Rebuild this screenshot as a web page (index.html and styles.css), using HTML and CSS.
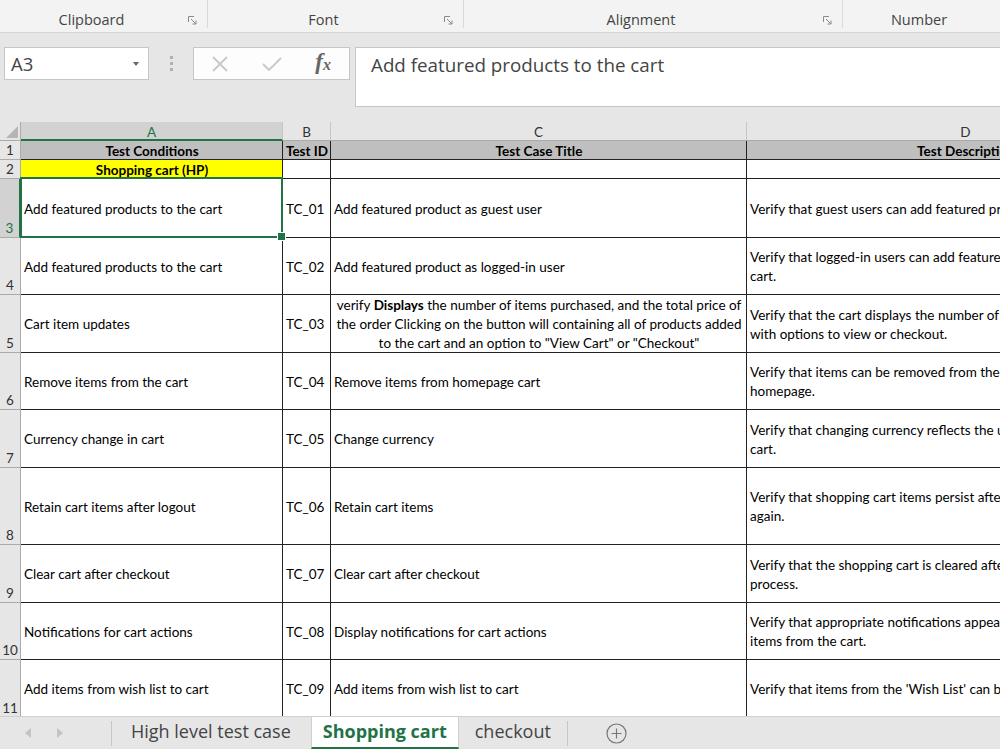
FILE: index.html
```html
<!DOCTYPE html>
<html lang="en">
<head>
    <meta charset="UTF-8">
    <meta name="viewport" content="width=device-width, initial-scale=1.0">
    <title>Shopping cart - Test cases</title>
    <link rel="stylesheet" href="styles.css">
</head>
<body>
    <!-- ribbon group labels -->
    <div class="ribbon">
        <div class="group g-clipboard">
            <span class="group-label">Clipboard</span>
            <svg class="launcher" viewBox="0 0 9 9"><path d="M0.5 6V0.5H6" /><path d="M3 3L8 8M8 4.5V8H4.5" /></svg>
        </div>
        <div class="group g-font">
            <span class="group-label">Font</span>
            <svg class="launcher" viewBox="0 0 9 9"><path d="M0.5 6V0.5H6" /><path d="M3 3L8 8M8 4.5V8H4.5" /></svg>
        </div>
        <div class="group g-alignment">
            <span class="group-label">Alignment</span>
            <svg class="launcher" viewBox="0 0 9 9"><path d="M0.5 6V0.5H6" /><path d="M3 3L8 8M8 4.5V8H4.5" /></svg>
        </div>
        <div class="group g-number">
            <span class="group-label">Number</span>
        </div>
    </div>

    <!-- name box + formula bar -->
    <div class="formula-bar">
        <div class="name-box"><span>A3</span><span class="caret"></span></div>
        <div class="grip"><i></i><i></i><i></i></div>
        <div class="fx-buttons">
            <span class="fx-slot"><svg width="16" height="16" viewBox="0 0 16 16"><path d="M1 1L15 15M15 1L1 15" /></svg></span>
            <span class="fx-slot"><svg width="20" height="16" viewBox="0 0 20 16"><path d="M1 8L7 14L19 2" /></svg></span>
            <span class="fx-slot fx"><i>f</i><i class="fx-x">x</i></span>
        </div>
        <div class="formula-input">Add featured products to the cart</div>
    </div>

    <!-- worksheet -->
    <div class="sheet">
        <div class="row h19">
            <div class="corner"><svg width="12" height="12" viewBox="0 0 12 12"><polygon points="12,0 12,12 0,12" /></svg></div>
            <div class="colhead c-a selected">A</div>
            <div class="colhead c-b">B</div>
            <div class="colhead c-c">C</div>
            <div class="colhead c-d">D</div>
        </div>

        <div class="row h19 title-row">
            <div class="rowhead">1</div>
            <div class="cell c-a center bold">Test Conditions</div>
            <div class="cell c-b center bold">Test ID</div>
            <div class="cell c-c center bold">Test Case Title</div>
            <div class="cell c-d center bold">Test Description</div>
        </div>

        <div class="row h19">
            <div class="rowhead">2</div>
            <div class="cell c-a center bold yellow">Shopping cart (HP)</div>
            <div class="cell c-b"></div>
            <div class="cell c-c"></div>
            <div class="cell c-d"></div>
        </div>

        <div class="row h59">
            <div class="rowhead selected">3</div>
            <div class="cell c-a active">Add featured products to the cart</div>
            <div class="cell c-b">TC_01</div>
            <div class="cell c-c">Add featured product as guest user</div>
            <div class="cell c-d">Verify that guest users can add featured products to the cart.</div>
        </div>

        <div class="row h57">
            <div class="rowhead">4</div>
            <div class="cell c-a">Add featured products to the cart</div>
            <div class="cell c-b">TC_02</div>
            <div class="cell c-c">Add featured product as logged-in user</div>
            <div class="cell c-d"><div>Verify that logged-in users can add featured products to their<br>cart.</div></div>
        </div>

        <div class="row h58">
            <div class="rowhead">5</div>
            <div class="cell c-a">Cart item updates</div>
            <div class="cell c-b">TC_03</div>
            <div class="cell c-c center"><div>verify <b>Displays</b> the number of items purchased, and the total price of<br>the order Clicking on the button will containing all of products added<br>to the cart and an option to "View Cart" or "Checkout"</div></div>
            <div class="cell c-d"><div>Verify that the cart displays the number of items and total price,<br>with options to view or checkout.</div></div>
        </div>

        <div class="row h57">
            <div class="rowhead">6</div>
            <div class="cell c-a">Remove items from the cart</div>
            <div class="cell c-b">TC_04</div>
            <div class="cell c-c">Remove items from homepage cart</div>
            <div class="cell c-d"><div>Verify that items can be removed from the cart on the<br>homepage.</div></div>
        </div>

        <div class="row h58">
            <div class="rowhead">7</div>
            <div class="cell c-a">Currency change in cart</div>
            <div class="cell c-b">TC_05</div>
            <div class="cell c-c">Change currency</div>
            <div class="cell c-d"><div>Verify that changing currency reflects the updated prices in the<br>cart.</div></div>
        </div>

        <div class="row h77">
            <div class="rowhead">8</div>
            <div class="cell c-a">Retain cart items after logout</div>
            <div class="cell c-b">TC_06</div>
            <div class="cell c-c">Retain cart items</div>
            <div class="cell c-d"><div>Verify that shopping cart items persist after logging out and in<br>again.</div></div>
        </div>

        <div class="row h58">
            <div class="rowhead">9</div>
            <div class="cell c-a">Clear cart after checkout</div>
            <div class="cell c-b">TC_07</div>
            <div class="cell c-c">Clear cart after checkout</div>
            <div class="cell c-d"><div>Verify that the shopping cart is cleared after completing the checkout<br>process.</div></div>
        </div>

        <div class="row h57">
            <div class="rowhead">10</div>
            <div class="cell c-a">Notifications for cart actions</div>
            <div class="cell c-b">TC_08</div>
            <div class="cell c-c">Display notifications for cart actions</div>
            <div class="cell c-d"><div>Verify that appropriate notifications appear when adding or removing<br>items from the cart.</div></div>
        </div>

        <div class="row h58">
            <div class="rowhead">11</div>
            <div class="cell c-a">Add items from wish list to cart</div>
            <div class="cell c-b">TC_09</div>
            <div class="cell c-c">Add items from wish list to cart</div>
            <div class="cell c-d">Verify that items from the 'Wish List' can be added to the cart.</div>
        </div>
    </div>

    <!-- sheet tabs -->
    <div class="tabs">
        <div class="tab-nav">
            <svg width="8" height="10" viewBox="0 0 8 10"><polygon points="7,0 7,10 1,5" /></svg>
            <svg width="8" height="10" viewBox="0 0 8 10"><polygon points="1,0 1,10 7,5" /></svg>
        </div>
        <span class="tab-sep"></span>
        <div class="tab">High level test case</div>
        <div class="tab active">Shopping cart</div>
        <div class="tab tab-last">checkout</div>
        <span class="tab-sep"></span>
        <svg class="add-sheet" width="21" height="21" viewBox="0 0 21 21"><circle cx="10.5" cy="10.5" r="9.5" /><path d="M10.5 5.5V15.5M5.5 10.5H15.5" /></svg>
    </div>
</body>
</html>
```

FILE: styles.css
```css
* {
    box-sizing: border-box;
}
body {
    margin: 0;
    width: 1000px;
    height: 749px;
    overflow: hidden;
    background-color: #e6e6e6;
    font-family: "Open Sans", "Noto Sans", sans-serif;
    color: #444;
}

/* ribbon */
.ribbon {
    display: flex;
    height: 33px;
    background-color: #f3f3f3;
    border-bottom: 1px solid #d5d5d5;
}
.group {
    display: flex;
    align-items: center;
    height: 28px;
    padding-top: 12px;
    border-right: 1px solid #dadada;
}
.group-label {
    flex: 1;
    text-align: center;
    font-size: 14.5px;
    line-height: 16px;
}
.launcher {
    width: 9px;
    height: 9px;
    margin: 0 10px 0 5px;
    fill: none;
    stroke: #8a8a8a;
    stroke-width: 1;
}
.g-clipboard { width: 208px; }
.g-font { width: 256px; }
.g-alignment { width: 379px; }
.g-number { width: 152px; border-right: none; }

/* formula bar */
.formula-bar {
    display: flex;
    align-items: flex-start;
    height: 89px;
    padding: 14px 0 0 4px;
}
.name-box {
    display: flex;
    align-items: center;
    width: 145px;
    height: 33px;
    padding: 0 9px 0 6px;
    background: #fff;
    border: 1px solid #c6c6c6;
    font-size: 18.5px;
}
.caret {
    margin-left: auto;
    border-top: 4px solid #666;
    border-left: 3.5px solid transparent;
    border-right: 3.5px solid transparent;
}
.grip {
    display: flex;
    flex-direction: column;
    align-items: center;
    justify-content: center;
    gap: 3px;
    width: 44px;
    height: 33px;
}
.grip i {
    width: 3px;
    height: 3px;
    background: #b0b0b0;
}
.fx-buttons {
    display: flex;
    width: 157px;
    height: 33px;
    background: #fdfdfd;
    border: 1px solid #c6c6c6;
}
.fx-slot {
    display: flex;
    align-items: center;
    justify-content: center;
    width: 52px;
}
.fx-slot svg {
    fill: none;
    stroke: #c8c8c8;
    stroke-width: 1.8;
}
.fx {
    font-family: "Liberation Serif", "DejaVu Serif", serif;
    font-size: 23px;
    font-weight: bold;
    color: #666;
    padding-bottom: 3px;
}
.fx-x {
    font-size: 16px;
    margin-top: 6px;
}
.formula-input {
    flex: 1;
    height: 60px;
    margin-left: 5px;
    padding: 4px 15px;
    background: #fff;
    border: 1px solid #c6c6c6;
    border-right: none;
    font-size: 18.8px;
    line-height: 26px;
}

/* worksheet */
.sheet {
    height: 594px;
    overflow: hidden;
    background: #fff;
    font-family: Lato, "Liberation Sans", sans-serif;
}
.row {
    display: flex;
}
.h19 { height: 19px; }
.h57 { height: 57px; }
.h58 { height: 58px; }
.h59 { height: 59px; }
.h77 { height: 77px; }

.corner {
    display: flex;
    align-items: flex-end;
    justify-content: flex-end;
    flex-shrink: 0;
    width: 21px;
    padding: 0 2px 2px 0;
    background: #e6e6e6;
    border-right: 1px solid #ababab;
    border-bottom: 1px solid #ababab;
}
.corner svg {
    fill: #b5b5b5;
}
.colhead {
    flex-shrink: 0;
    background: #e6e6e6;
    border-right: 1px solid #c6c6c6;
    border-bottom: 1px solid #ababab;
    text-align: center;
    font-size: 13.5px;
    line-height: 20px;
    color: #333;
}
.colhead.selected {
    background: #d2d2d2;
    color: #217346;
    border-bottom: 2px solid #217346;
}
.rowhead {
    display: flex;
    align-items: flex-end;
    justify-content: center;
    flex-shrink: 0;
    width: 21px;
    background: #e6e6e6;
    border-right: 1px solid #ababab;
    border-bottom: 1px solid #ababab;
    font-size: 13.5px;
    line-height: 17px;
    color: #333;
}
.rowhead.selected {
    background: #d2d2d2;
    color: #217346;
    border-right: 2px solid #217346;
}

.c-a { width: 262px; }
.c-b { width: 48px; }
.c-c { width: 416px; }
.c-d { width: 438px; }

.cell {
    display: flex;
    align-items: center;
    flex-shrink: 0;
    padding: 2px 2px 0 3px;
    border-right: 1px solid #222;
    border-bottom: 1px solid #222;
    font-size: 13.5px;
    line-height: 19px;
    color: #000;
    white-space: nowrap;
    overflow: hidden;
}
.cell.center {
    justify-content: center;
    text-align: center;
}
.cell.bold {
    font-weight: bold;
}
.title-row .cell {
    background: #bfbfbf;
}
.cell.yellow {
    background: #ffff00;
}
.cell.active {
    position: relative;
    overflow: visible;
}
.cell.active::before {
    content: "";
    position: absolute;
    top: -2px;
    left: -1px;
    right: -1px;
    bottom: -1px;
    border: 2px solid #217346;
    z-index: 2;
}
.cell.active::after {
    content: "";
    position: absolute;
    right: -4px;
    bottom: -4px;
    width: 7px;
    height: 7px;
    background: #217346;
    border: 1px solid #fff;
    z-index: 3;
}

/* sheet tabs */
.tabs {
    display: flex;
    align-items: center;
    height: 33px;
    background: #e6e6e6;
    border-top: 1px solid #d0d0d0;
    font-size: 18px;
    color: #444;
}
.tab-nav {
    display: flex;
    align-items: center;
    gap: 24px;
    width: 111px;
    padding-left: 24px;
}
.tab-nav svg {
    fill: #c4c4c4;
}
.tab-sep {
    width: 1px;
    height: 25px;
    background: #c6c6c6;
}
.tab {
    display: flex;
    align-items: center;
    height: 100%;
    padding: 0 20px 4px 19px;
    line-height: 24px;
}
.tab.active {
    padding: 0 11px 2px;
    background: #fff;
    color: #217346;
    font-weight: bold;
    border-bottom: 2px solid #217346;
    border-left: 1px solid #d0d0d0;
    border-right: 1px solid #d0d0d0;
}
.tab-last {
    padding: 0 16px 4px 16px;
}
.add-sheet {
    margin-left: 38px;
    fill: none;
    stroke: #777;
    stroke-width: 1.2;
}
```
